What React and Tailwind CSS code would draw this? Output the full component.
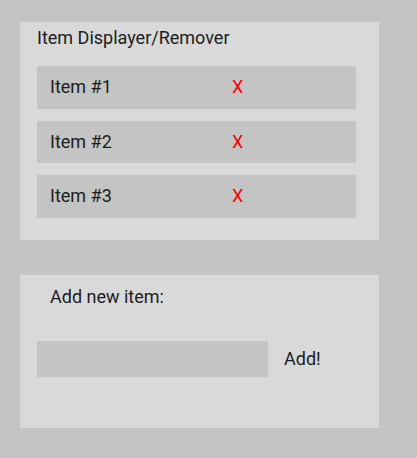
export default function App() {
  const items = ['Item #1', 'Item #2', 'Item #3']

  return (
    <div className="min-h-[458px] w-full bg-[#c4c4c4] pt-[22px] pl-[20px] font-['Roboto',sans-serif] text-[18px] leading-[24px] text-[#1c1c1c]">
      <div className="w-[359px] bg-[#d9d9d9] pl-[17px] pr-[23px] pt-[4px] pb-[22px]">
        <h2>Item Displayer/Remover</h2>
        <ul className="mt-[16px] flex flex-col gap-[12px]">
          {items.map((item) => (
            <li key={item} className="flex h-[42.5px] items-center bg-[#c4c4c4] pl-[13px]">
              <span className="w-[182px]">{item}</span>
              <button type="button" className="text-[#ff0000]">X</button>
            </li>
          ))}
        </ul>
      </div>

      <div className="mt-[35px] h-[153px] w-[359px] bg-[#d9d9d9] px-[17px] pt-[10px]">
        <p className="pl-[13px]">Add new item:</p>
        <div className="mt-[32px] flex items-center gap-[16px]">
          <input type="text" className="h-[36px] w-[231px] bg-[#c4c4c4] px-2 outline-none" />
          <button type="button">Add!</button>
        </div>
      </div>
    </div>
  )
}
